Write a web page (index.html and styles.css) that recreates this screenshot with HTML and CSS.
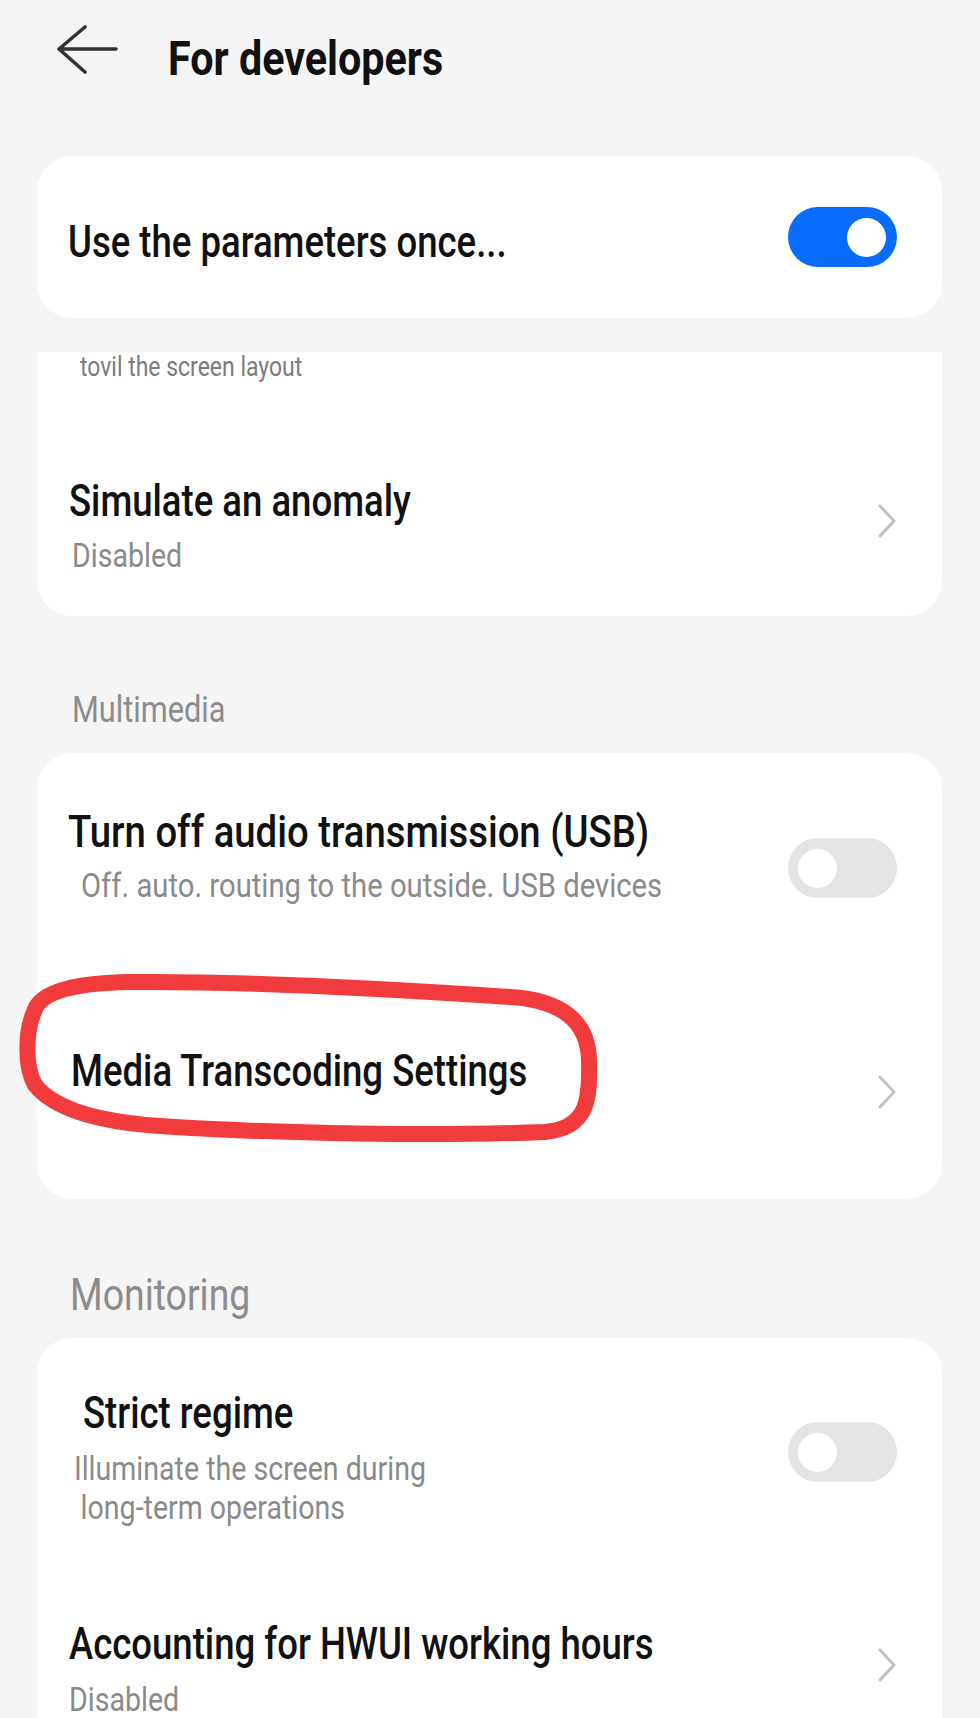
FILE: index.html
```html
<!DOCTYPE html>
<html lang="en">
<head>
  <meta charset="UTF-8">
  <title>For developers</title>
  <link rel="stylesheet" href="styles.css">
</head>
<body>
  <div class="screen">
    <header class="topbar">
      <svg class="back" width="62" height="50" viewBox="0 0 62 50">
        <path d="M2 24 H59 M28 2 L2 24 L28 47" fill="none" stroke="#333" stroke-width="3.6" stroke-linecap="round" stroke-linejoin="round"/>
      </svg>
      <h1 class="title">For developers</h1>
    </header>

    <section class="card card-first">
      <div class="row">
        <div class="text push"><div class="label">Use the parameters once...</div></div>
        <span class="switch on"><span class="knob"></span></span>
      </div>
    </section>

    <section class="card card-cut">
      <p class="cut-note">tovil the screen layout</p>
      <div class="row row-sim">
        <div class="text">
          <div class="label">Simulate an anomaly</div>
          <div class="sub nudge">Disabled</div>
        </div>
        <svg class="chevron up" width="20" height="34" viewBox="0 0 20 34"><path d="M3 2 L17 17 L3 32" fill="none" stroke="#c2c2c2" stroke-width="3" stroke-linecap="round" stroke-linejoin="round"/></svg>
      </div>
    </section>

    <h2 class="group">Multimedia</h2>
    <section class="card">
      <div class="row row-usb">
        <div class="text">
          <div class="label wide">Turn off audio transmission (USB)</div>
          <div class="sub sub-shift">Off. auto. routing to the outside. USB devices</div>
        </div>
        <span class="switch low"><span class="knob"></span></span>
      </div>
      <div class="row row-media">
        <div class="text"><div class="label nudge">Media Transcoding Settings</div></div>
        <svg class="chevron down" width="20" height="34" viewBox="0 0 20 34"><path d="M3 2 L17 17 L3 32" fill="none" stroke="#c2c2c2" stroke-width="3" stroke-linecap="round" stroke-linejoin="round"/></svg>
      </div>
      <svg class="scribble" width="594" height="182" viewBox="0 0 594 182">
        <path d="M21 43 C27 21, 67 14, 117 13 C237 12, 407 22, 497 28 C547 31, 575 51, 576 91 C577 131, 575 159, 532 163 C427 167, 267 165, 147 157 C87 153, 42 141, 22 116 C11 96, 13 61, 21 43 Z" fill="none" stroke="#f23b3c" stroke-width="16" stroke-linejoin="round"/>
      </svg>
    </section>

    <h2 class="group group-large">Monitoring</h2>
    <section class="card card-open">
      <div class="row row-strict">
        <div class="text">
          <div class="label indent">Strict regime</div>
          <div class="sub sub-lines">
            <span class="line-a">Illuminate the screen during</span>
            <span class="line-b">long-term operations</span>
          </div>
        </div>
        <span class="switch high"><span class="knob"></span></span>
      </div>
      <div class="row row-hwui">
        <div class="text">
          <div class="label">Accounting for HWUI working hours</div>
          <div class="sub">Disabled</div>
        </div>
        <svg class="chevron up" width="20" height="34" viewBox="0 0 20 34"><path d="M3 2 L17 17 L3 32" fill="none" stroke="#c2c2c2" stroke-width="3" stroke-linecap="round" stroke-linejoin="round"/></svg>
      </div>
    </section>
  </div>
</body>
</html>
```

FILE: styles.css
```css
/* the phone font is narrow: Roboto squeezed sideways stands in for it */
body { margin: 0; background: #f5f5f5; font-family: Roboto, "Liberation Sans", sans-serif; color: #111; }
.screen { padding: 0 38px 0 37px; }

.title, .label, .sub, .group, .cut-note { white-space: nowrap; transform-origin: left center; transform: scaleX(0.84); }

.topbar { display: flex; align-items: flex-start; height: 156px; box-sizing: border-box; padding: 25px 0 0 20px; }
.back { flex: none; }
.title { margin: 4px 0 0 49px; font-size: 48px; line-height: 60px; font-weight: 700; transform: scaleX(0.86); }

.card { position: relative; background: #fff; border-radius: 35px; }
.card-first { margin-bottom: 45px; }
.card-first .row { min-height: 162px; }
.card-cut { border-radius: 0 0 35px 35px; }
.card-open { border-radius: 35px 35px 0 0; padding-bottom: 60px; }

.row { display: flex; align-items: center; padding: 0 45px 0 31px; }
.text { flex: 1; min-width: 0; display: flex; flex-direction: column; }
.push { padding-top: 10px; }
.label { font-size: 44px; line-height: 52px; font-weight: 500; transform: scaleX(0.83); }
.label.wide { transform: scaleX(0.87); }
.label.indent { margin-left: 15px; }
.nudge { margin-left: 3px; }
.sub { font-size: 34px; line-height: 40px; color: #8a8a8a; margin-top: 8px; }
.sub-shift { margin-top: 7px; margin-left: 13px; transform: scaleX(0.86); }
.sub-lines { line-height: 39px; margin-top: 10px; }
.sub-lines span { display: block; }
.line-a { padding-left: 7px; }
.line-b { padding-left: 15px; }

.cut-note { margin: -11px 0 0 43px; font-size: 28px; line-height: 30px; color: #7b7b7b; transform: scaleX(0.82); }
.row-sim { padding-top: 93px; padding-bottom: 41px; padding-left: 32px; }
.row-usb { padding-top: 53px; }
.row-media { padding-top: 128px; padding-bottom: 90px; }
.row-strict { padding-top: 49px; }
.row-hwui { padding-top: 91px; padding-left: 32px; }
.row-hwui .sub { margin-top: 9px; }

.group { margin: 72px 0 21px 35px; font-size: 37px; line-height: 44px; font-weight: 400; color: #8c8c8c; transform: scaleX(0.83); }
.group-large { margin: 70px 0 17px 33px; font-size: 44px; line-height: 52px; transform: scaleX(0.85); }

.switch { flex: none; display: flex; align-items: center; width: 109px; height: 60px; box-sizing: border-box; padding: 0 10px; border-radius: 30px; background: #e4e4e4; }
.switch.on { background: #0a6cfd; justify-content: flex-end; padding: 0 11px; }
.switch.low { margin-top: 25px; }
.switch.high { margin-bottom: 10px; }
.knob { width: 39px; height: 39px; border-radius: 50%; background: #fff; }

.chevron { flex: none; }
.chevron.up { margin-bottom: 8px; }
.chevron.down { margin-top: 42px; }

.scribble { position: absolute; left: -24px; top: 216px; pointer-events: none; }
```
